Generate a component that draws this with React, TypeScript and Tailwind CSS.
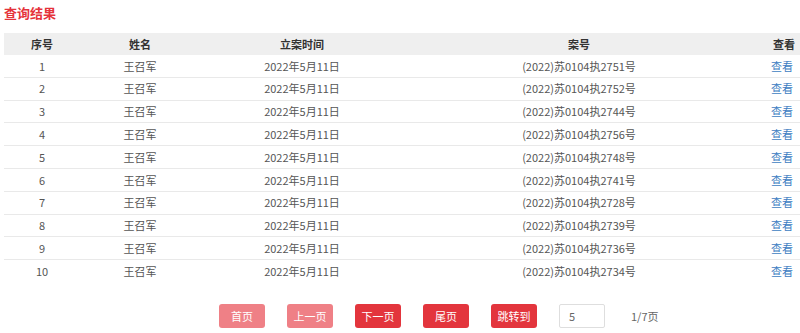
const rows = [
  "2751", "2752", "2744", "2756", "2748", "2741", "2728", "2739", "2736", "2734",
].map((n, i) => ({ no: i + 1, name: "王召军", date: "2022年5月11日", caseNo: `(2022)苏0104执${n}号` }));

const cols = "grid grid-cols-[76px_120px_204px_350px_1fr]";

export default function App() {
  return (
    <div className="w-[800px] h-[333px] bg-white font-['Noto_Sans_CJK_SC','Noto_Sans',sans-serif] text-[11px] text-[#555]">
      <h2 className="pl-[4px] pt-[4px] h-[33px] text-[13px] font-bold leading-[18px] text-[#e5333b]">查询结果</h2>
      <div className="ml-[4px]">
        <div className={`${cols} h-[22px] items-center bg-[#efefef] font-bold text-[#333]`}>
          <div className="text-center">序号</div>
          <div className="text-center">姓名</div>
          <div className="text-center">立案时间</div>
          <div className="text-center">案号</div>
          <div className="text-right pr-[5px]">查看</div>
        </div>
        {rows.map((r, i) => (
          <div
            key={r.no}
            className={`${cols} h-[22.8px] items-center ${i < rows.length - 1 ? "border-b border-[#e9e9e9]" : ""}`}
          >
            <div className="text-center">{r.no}</div>
            <div className="text-center">{r.name}</div>
            <div className="text-center">{r.date}</div>
            <div className="text-center">{r.caseNo}</div>
            <div className="text-right pr-[7px] text-[#3d7dc2]">查看</div>
          </div>
        ))}
      </div>
      <div className="mt-[21px] flex items-center pl-[219px] gap-[22px]">
        <Btn dim>首页</Btn>
        <Btn dim>上一页</Btn>
        <Btn>下一页</Btn>
        <Btn>尾页</Btn>
        <Btn>跳转到</Btn>
        <div className="w-[46px] h-[24px] border border-[#dedede] rounded-[2px] pl-[9px] leading-[22px] text-[#666]">5</div>
        <span className="ml-[4px] text-[#666]">1/7页</span>
      </div>
    </div>
  );
}

function Btn({ children, dim }: { children: React.ReactNode; dim?: boolean }) {
  return (
    <button
      className={`w-[46px] h-[24px] rounded-[3px] text-white text-[11px] ${dim ? "bg-[#ef8086]" : "bg-[#e3353d]"}`}
    >
      {children}
    </button>
  );
}
